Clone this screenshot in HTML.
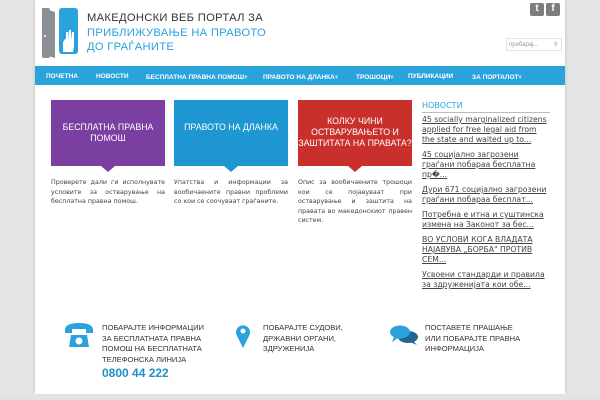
<!DOCTYPE html>
<html><head><meta charset="utf-8"><style>
*{margin:0;padding:0;box-sizing:border-box}
body{width:600px;height:400px;background:#e6e6e6;font-family:"Liberation Sans",sans-serif;position:relative;overflow:hidden}
.wrap{position:absolute;left:35px;top:0;width:530px;height:394px;background:#fff;box-shadow:0 0 4px #bbb}
.foot{position:absolute;left:0;top:394px;width:600px;height:6px;background:#e2e2e2}
.abs{position:absolute}
.nav{left:0;top:66px;width:530px;height:19px;background:#2aa3dc;color:#fff;font-size:6.5px;font-weight:bold}
.nav span{position:absolute;top:7px;white-space:nowrap}
.box{top:100px;width:114px;height:66px;color:#fff;font-size:8.8px;text-align:center;line-height:11px;padding-top:22px}
.box:after{content:"";position:absolute;left:50px;bottom:-6px;border-left:7px solid transparent;border-right:7px solid transparent;border-top:6px solid}
.desc{top:178px;width:114px;color:#444;line-height:9.5px;text-align:justify;font-family:"DejaVu Sans",sans-serif;font-size:6.3px}
.news{left:387px;top:101px;width:128px;font-size:7.7px;color:#444;line-height:10px;font-family:"DejaVu Sans",sans-serif}
.news p{text-decoration:underline;margin-bottom:5px}
.cta{font-size:7.6px;color:#333;line-height:10.5px}
</style></head><body>
<div class="wrap">
 <svg class="abs" style="left:2px;top:6px" width="42" height="52"><path d="M5 2 L18 6 L18 52 L5 48 Z" fill="#8a8f96"/><rect x="5" y="2" width="8" height="50" rx="2" fill="#8a8f96"/><rect x="22" y="2" width="19" height="46" rx="3" fill="#2aa3dc"/><path d="M26 46 L26 36 L29 32 L29 26 L31 26 L31 34 L32 24 L34 24 L34 34 L35 26 L37 26 L37 40 L36 46Z" fill="#fff"/><circle cx="8" cy="30" r="1" fill="#fff"/></svg>
 <div class="abs" style="left:52px;top:11px;font-size:11.2px;color:#333;line-height:14.5px;letter-spacing:.3px">МАКЕДОНСКИ ВЕБ ПОРТАЛ ЗА<br><span style="color:#2aa3dc">ПРИБЛИЖУВАЊЕ НА ПРАВОТО<br>ДО ГРАЃАНИТЕ</span></div>
 <div class="abs" style="left:495px;top:3px;width:14px;height:13px;background:#7d7d7d;border-radius:2px;color:#fff;font-size:10px;font-weight:bold;text-align:center">t</div>
 <div class="abs" style="left:511px;top:3px;width:14px;height:13px;background:#7d7d7d;border-radius:2px;color:#fff;font-size:10px;font-weight:bold;text-align:center">f</div>
 <div class="abs" style="left:471px;top:38px;width:56px;height:13px;border:1px solid #e3e3e3;font-size:6px;color:#999;padding:3px 2px">пребарај...<span style="position:absolute;right:3px;top:2px">&#9906;</span></div>
 <div class="abs nav">
  <span style="left:11px">ПОЧЕТНА</span><span style="left:61px">НОВОСТИ</span><span style="left:111px">БЕСПЛАТНА ПРАВНА ПОМОШ<b style="color:#9dd">▾</b></span><span style="left:228px">ПРАВОТО НА ДЛАНКА<b style="color:#9dd">▾</b></span><span style="left:321px">ТРОШОЦИ<b style="color:#9dd">▾</b></span><span style="left:373px">ПУБЛИКАЦИИ</span><span style="left:437px">ЗА ПОРТАЛОТ<b style="color:#9dd">▾</b></span>
 </div>
 <div class="abs box" style="left:16px;background:#7b3fa1;color:#7b3fa1"><div style="color:#fff">БЕСПЛАТНА ПРАВНА<br>ПОМОШ</div></div>
 <div class="abs box" style="left:139px;background:#1d96d1;color:#1d96d1"><div style="color:#fff">ПРАВОТО НА ДЛАНКА</div></div>
 <div class="abs box" style="left:263px;background:#c9302c;color:#c9302c;padding-top:16px"><div style="color:#fff">КОЛКУ ЧИНИ<br>ОСТВАРУВАЊЕТО И<br>ЗАШТИТАТА НА ПРАВАТА?</div></div>
 <div class="abs desc" style="left:16px">Проверете дали ги исполнувате условите за остварување на бесплатна правна помош.</div>
 <div class="abs desc" style="left:139px">Упатства и информации за вообичаените правни проблеми со кои се соочуваат граѓаните.</div>
 <div class="abs desc" style="left:263px">Опис за вообичаените трошоци кои се појавуваат при остварување и заштита на правата во македонскиот правен систем.</div>
 <div class="abs news">
  <div style="color:#2aa3dc;font-size:8px;border-bottom:1px solid #bbb;padding-bottom:1px;margin-bottom:2px">НОВОСТИ</div>
  <p>45 socially marginalized citizens applied for free legal aid from the state and waited up to...</p>
  <p>45 социјално загрозени граѓани побараа бесплатна пр�...</p>
  <p>Дури 671 социјално загрозени граѓани побараа бесплат...</p>
  <p>Потребна е итна и суштинска измена на Законот за бес...</p>
  <p>ВО УСЛОВИ КОГА ВЛАДАТА НАЈАВУВА „БОРБА" ПРОТИВ СЕМ...</p>
  <p>Усвоени стандарди и правила за здруженијата кои обе...</p>
 </div>
 <svg class="abs" style="left:29px;top:322px" width="30" height="26"><path d="M1 8 Q1 1 15 1 Q29 1 29 8 L29 11 L22 11 L22 7 L8 7 L8 11 L1 11Z" fill="#2aa3dc"/><path d="M5 25 L7 13 L23 13 L25 25Z" fill="#2aa3dc"/><circle cx="15" cy="19" r="3.5" fill="#fff"/></svg>
 <div class="abs cta" style="left:67px;top:323px">ПОБАРАЈТЕ ИНФОРМАЦИИ<br>ЗА БЕСПЛАТНАТА ПРАВНА<br>ПОМОШ НА БЕСПЛАТНАТА<br>ТЕЛЕФОНСКА ЛИНИЈА<br><span style="color:#1f8fc4;font-size:12px;font-weight:bold;line-height:17px">0800 44 222</span></div>
 <svg class="abs" style="left:200px;top:324px" width="16" height="24"><path d="M8 24 L2 12 A7 7 0 1 1 14 12Z" fill="#2aa3dc"/><circle cx="8" cy="7" r="2.5" fill="#fff"/></svg>
 <div class="abs cta" style="left:228px;top:323px">ПОБАРАЈТЕ СУДОВИ,<br>ДРЖАВНИ ОРГАНИ,<br>ЗДРУЖЕНИЈА</div>
 <svg class="abs" style="left:354px;top:324px" width="30" height="22"><ellipse cx="19" cy="13" rx="10" ry="6" fill="#1e6890"/><path d="M24 17 L28 21 L21 18Z" fill="#1e6890"/><ellipse cx="11" cy="8" rx="10" ry="6.5" fill="#2aa3dc"/><path d="M5 13 L3 18 L9 14Z" fill="#2aa3dc"/></svg>
 <div class="abs cta" style="left:390px;top:323px">ПОСТАВЕТЕ ПРАШАЊЕ<br>ИЛИ ПОБАРАЈТЕ ПРАВНА<br>ИНФОРМАЦИЈА</div>
</div>
<div class="foot"></div>
</body></html>
